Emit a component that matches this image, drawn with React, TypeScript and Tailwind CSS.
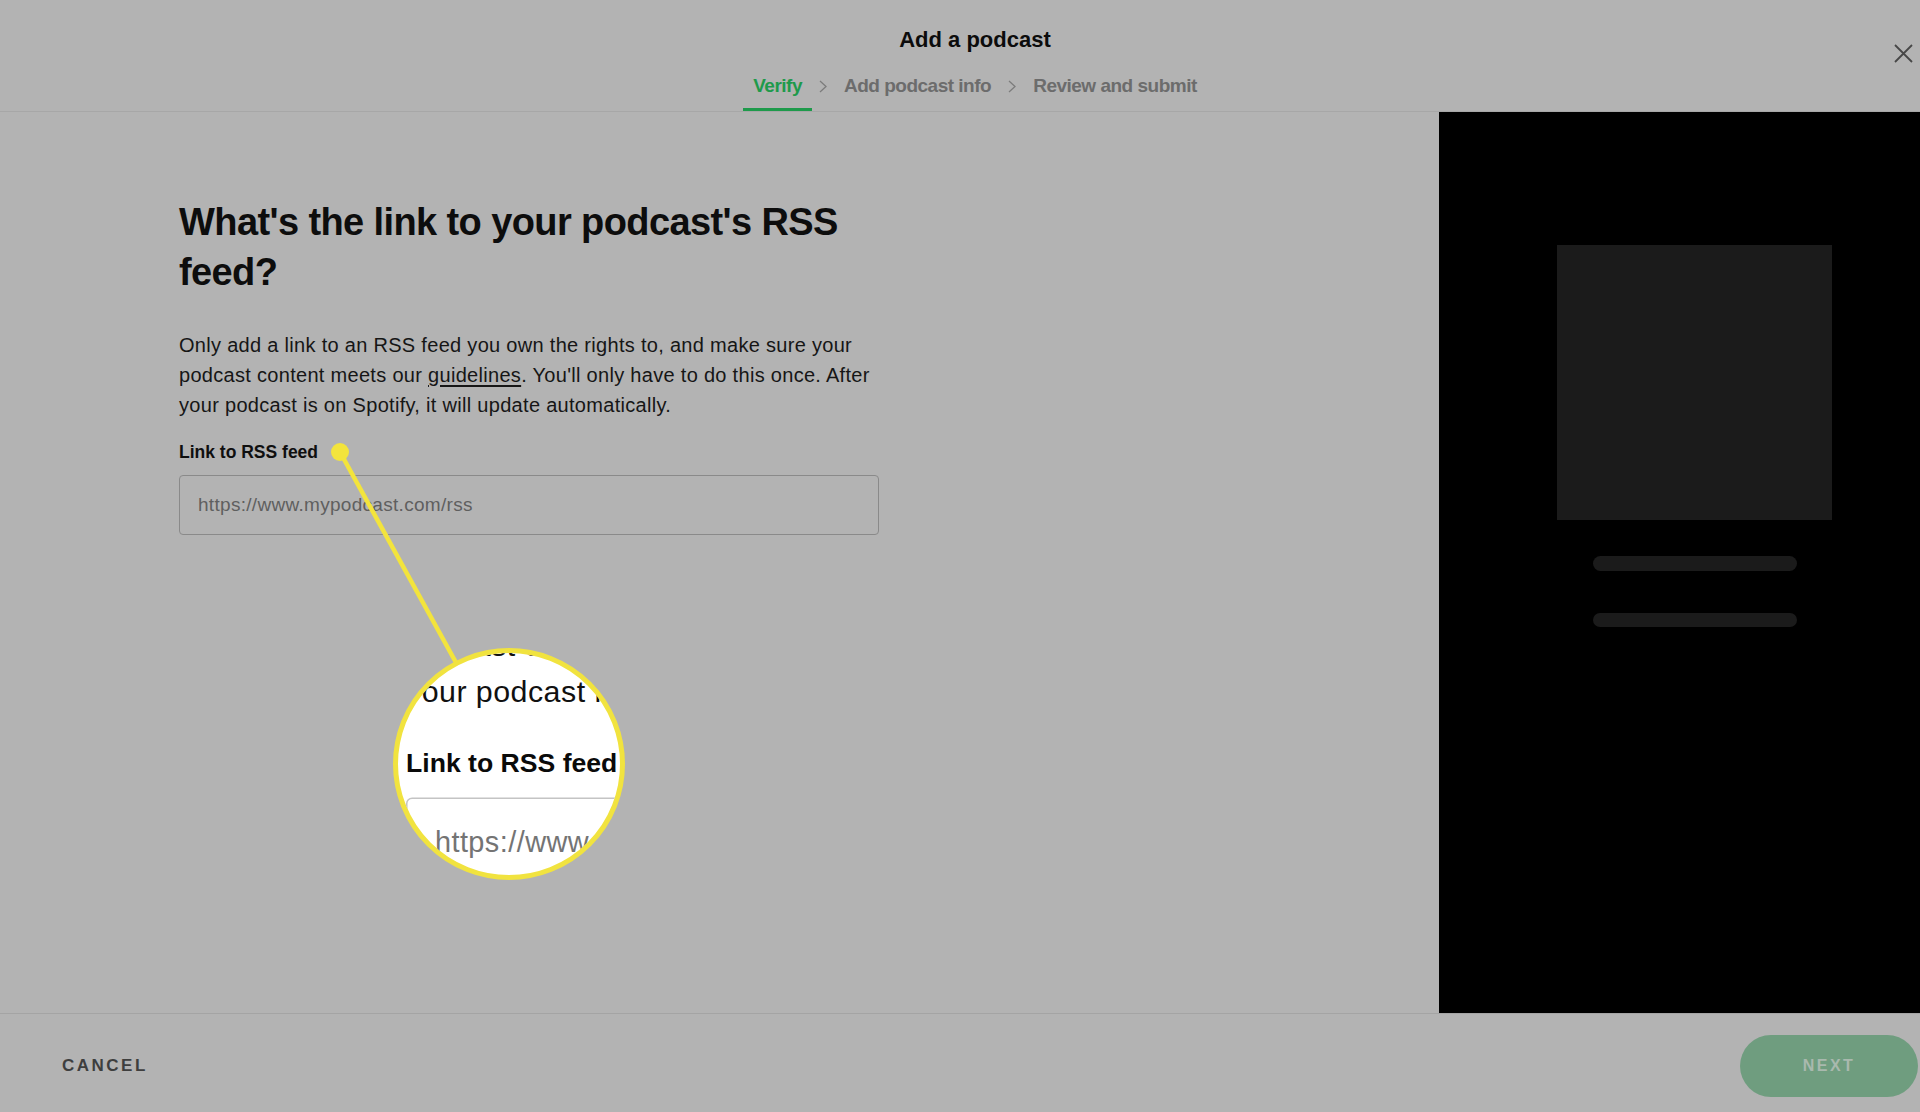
import React from "react";

function Chevron() {
  return (
    <div className="mx-[7px] h-[24px] flex items-center">
      <svg width="8" height="13" viewBox="0 0 8 13" fill="none">
        <path d="M1 1 L7 6.5 L1 12" stroke="#7c7c7c" strokeWidth="1.3" />
      </svg>
    </div>
  );
}

function FormCopy({ dim }: { dim: boolean }) {
  return (
    <>
      <p className={"text-[20px] leading-[30px] tracking-[0.3px] " + (dim ? "text-[#161616]" : "text-[#111111]")}>
        Only add a link to an RSS feed you own the rights to, and make sure your
        <br />
        podcast content meets our{" "}
        <span className="underline underline-offset-[3px]">guidelines</span>. You'll only have to do this once. After
        <br />
        your podcast is on Spotify, it will update automatically.
      </p>
      <div className={"mt-[22px] text-[17.5px] leading-[20px] font-bold " + (dim ? "text-[#0f0f0f]" : "text-[#0a0a0a]")}>
        Link to RSS feed
      </div>
      <div
        className={
          "mt-[13px] w-[700px] h-[60px] rounded-[4px] border flex items-center pl-[18px] " +
          (dim ? "border-[#8a8a8a]" : "border-[#c4c4c4]")
        }
      >
        <span className={"text-[19px] tracking-[0.3px] " + (dim ? "text-[#5f5f5f]" : "text-[#747474]")}>
          https://www.mypodcast.com/rss
        </span>
      </div>
    </>
  );
}

export default function App() {
  return (
    <div className="w-[1920px] h-[1112px] overflow-hidden bg-[#b3b3b3] font-['Liberation_Sans',Arial,sans-serif]">
      <div className="relative w-[1950px] h-[1112px] flex flex-col">
        <header className="relative h-[112px] shrink-0 border-b border-[#a7a7a7] flex flex-col items-center pt-[26px]">
          <h1 className="text-[22px] leading-[28px] font-bold text-[#0c0c0c]">Add a podcast</h1>
          <nav className="mt-[20px] flex items-start h-[37px]">
            <div className="px-[10px] h-[37px] border-b-[3px] border-[#1e9a4b] text-[19px] leading-[24px] font-bold tracking-[-0.5px] text-[#1e9a4b]">
              Verify
            </div>
            <Chevron />
            <div className="px-[10px] h-[37px] text-[19px] leading-[24px] font-bold tracking-[-0.5px] text-[#6c6c6c]">
              Add podcast info
            </div>
            <Chevron />
            <div className="px-[10px] h-[37px] text-[19px] leading-[24px] font-bold tracking-[-0.5px] text-[#6c6c6c]">
              Review and submit
            </div>
          </nav>
          <button className="absolute top-[44px] right-[37px] w-[19px] h-[19px]">
            <svg width="19" height="19" viewBox="0 0 19 19" fill="none">
              <path d="M1 1 L18 18 M18 1 L1 18" stroke="#474747" strokeWidth="1.8" />
            </svg>
          </button>
        </header>

        <main className="flex-1 flex min-h-0">
          <section className="flex-1 pl-[179px] pt-[85px]">
            <h2 className="text-[38px] leading-[50px] font-bold tracking-[-0.6px] text-[#0d0d0d]">
              What's the link to your podcast's RSS
              <br />
              feed?
            </h2>
            <div className="mt-[33px]">
              <FormCopy dim={true} />
            </div>
          </section>
          <aside className="w-[511px] bg-black flex flex-col items-center pt-[133px]">
            <div className="w-[275px] h-[275px] bg-[#1b1b1b]" />
            <div className="mt-[36px] w-[204px] h-[15px] rounded-full bg-[#1b1b1b]" />
            <div className="mt-[42px] w-[204px] h-[14px] rounded-full bg-[#1b1b1b]" />
          </aside>
        </main>

        <footer className="h-[99px] shrink-0 border-t border-[#a4a4a4] flex items-center justify-between pl-[62px] pr-[32px] pt-[6px]">
          <button className="text-[17px] font-bold tracking-[2.5px] text-[#3e3e3e]">CANCEL</button>
          <button className="w-[178px] h-[62px] rounded-full bg-[#6f9d7f] text-[16px] font-bold tracking-[2.5px] text-[#a9b9ae] flex items-center justify-center">
            NEXT
          </button>
        </footer>

        <svg
          className="absolute left-0 top-0 pointer-events-none"
          width="1950"
          height="1112"
          viewBox="0 0 1950 1112"
        >
          <line x1="340" y1="452" x2="470" y2="688" stroke="#f3e43c" strokeWidth="4.5" />
          <circle cx="340" cy="452" r="9" fill="#f3e43c" />
        </svg>

        <div className="absolute left-[393px] top-[648px] w-[232px] h-[232px] rounded-full border-[5px] border-[#f1e33f] bg-white overflow-hidden">
          <div className="absolute left-[8px] top-[-76px] w-[700px] origin-top-left scale-[1.52]">
            <FormCopy dim={false} />
          </div>
        </div>
      </div>
    </div>
  );
}
